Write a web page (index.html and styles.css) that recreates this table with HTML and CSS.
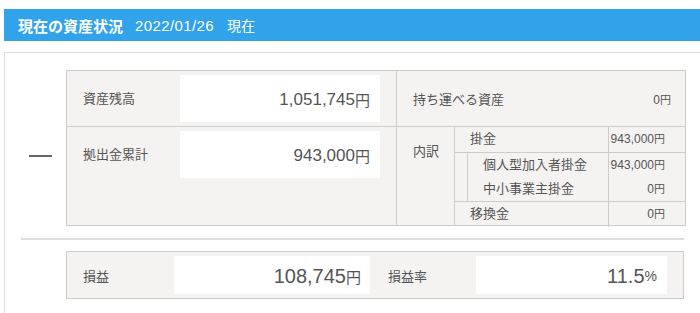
FILE: index.html
```html
<!DOCTYPE html>
<html lang="ja">
<head>
    <meta charset="UTF-8">
    <title>現在の資産状況</title>
    <link rel="stylesheet" href="styles.css">
</head>
<body>
    <div class="page">
        <h2 class="title-bar">
            <span class="title">現在の資産状況</span>
            <span class="date">2022/01/26<span class="suffix">現在</span></span>
        </h2>

        <div class="summary">
            <div class="calc">
                <div class="op"><div class="minus"></div></div>

                <div class="asset-table">
                    <div class="main">
                        <div class="main-row balance">
                            <div class="label">資産残高</div>
                            <div class="value-box">1,051,745<span class="yen">円</span></div>
                        </div>
                        <div class="main-row total">
                            <div class="label">拠出金累計</div>
                            <div class="value-box">943,000<span class="yen">円</span></div>
                        </div>
                    </div>

                    <div class="side">
                        <div class="portable">
                            <span>持ち運べる資産</span>
                            <span class="amt-s">0<span class="yen-s">円</span></span>
                        </div>
                        <div class="breakdown">
                            <div class="bd-label">内訳</div>
                            <div class="bd-body">
                                <div class="bd-row first">
                                    <span class="bd-name">掛金</span>
                                    <span class="bd-amt">943,000<span class="yen-s">円</span></span>
                                </div>
                                <div class="bd-nested">
                                    <div class="bd-row">
                                        <span class="bd-name">個人型加入者掛金</span>
                                        <span class="bd-amt">943,000<span class="yen-s">円</span></span>
                                    </div>
                                    <div class="bd-row">
                                        <span class="bd-name">中小事業主掛金</span>
                                        <span class="bd-amt">0<span class="yen-s">円</span></span>
                                    </div>
                                </div>
                                <div class="bd-row last">
                                    <span class="bd-name">移換金</span>
                                    <span class="bd-amt">0<span class="yen-s">円</span></span>
                                </div>
                            </div>
                        </div>
                    </div>
                </div>
            </div>

            <div class="divider"></div>

            <div class="profit">
                <div class="p-label">損益</div>
                <div class="p-box gain">108,745<span class="yen">円</span></div>
                <div class="p-label rate-label">損益率</div>
                <div class="p-box rate">11.5<span class="pct">%</span></div>
            </div>
        </div>
    </div>
</body>
</html>
```

FILE: styles.css
```css
html, body {
    overflow: hidden;
}
body {
    margin: 0;
    font-family: "Liberation Sans", "Noto Sans CJK JP", sans-serif;
    font-size: 13px;
    color: #555;
    background-color: #fff;
}
.page {
    padding: 9px 0 0 4px;
    width: 700px;
}

/* Title bar */
.title-bar {
    margin: 0;
    height: 32px;
    display: flex;
    align-items: center;
    padding-left: 14px;
    background-color: #30a3ea;
    color: #fff;
    font-weight: normal;
}
.title {
    font-size: 15px;
    font-weight: bold;
}
.date {
    font-size: 15px;
    letter-spacing: 0.4px;
    margin-left: 12px;
}
.date .suffix {
    font-size: 14px;
    letter-spacing: 0;
    margin-left: 13px;
}

/* Summary panel */
.summary {
    margin-top: 11px;
    border: 1px solid #ddd;
    padding: 17px 0 40px;
}
.calc {
    display: flex;
}
.op {
    width: 61px;
    padding: 85px 0 0 24px;
    box-sizing: border-box;
}
.minus {
    width: 23px;
    height: 2px;
    background-color: #666;
}

.asset-table {
    display: flex;
    width: 618px;
    border: 1px solid #ccc;
    background-color: #f4f3f1;
}
.main {
    width: 330px;
    border-right: 1px solid #ccc;
    box-sizing: border-box;
}
.main-row {
    display: flex;
    align-items: flex-start;
    padding-top: 4px;
    box-sizing: border-box;
}
.main-row.balance {
    height: 56px;
    border-bottom: 1px solid #ccc;
}
.main-row.total {
    height: 98px;
}
.label {
    width: 113px;
    padding-left: 16px;
    box-sizing: border-box;
    line-height: 47px;
}
.value-box {
    width: 200px;
    height: 47px;
    display: flex;
    align-items: center;
    justify-content: flex-end;
    padding: 2px 10px 0 0;
    box-sizing: border-box;
    background-color: #fff;
    font-size: 17px;
    color: #555;
}
.yen {
    font-size: 15px;
}

.side {
    flex-grow: 1;
}
.portable {
    height: 56px;
    display: flex;
    align-items: center;
    justify-content: space-between;
    padding: 0 14px 0 16px;
    border-bottom: 1px solid #ccc;
    box-sizing: border-box;
}
.amt-s, .bd-amt {
    font-size: 12px;
    color: #555;
}
.yen-s {
    font-size: 11px;
}

/* Breakdown of contributions */
.breakdown {
    display: flex;
    height: 98px;
}
.bd-label {
    width: 58px;
    padding: 14px 0 0 16px;
    border-right: 1px solid #ccc;
    box-sizing: border-box;
}
.bd-body {
    flex-grow: 1;
}
.bd-row {
    display: flex;
    height: 24px;
    line-height: 24px;
}
.bd-row.first {
    height: 25px;
    border-bottom: 1px solid #ccc;
}
.bd-row.last {
    height: 25px;
    border-top: 1px solid #ccc;
}
.bd-nested {
    margin-left: 12px;
    border-left: 1px solid #ccc;
}
.bd-name {
    flex-grow: 1;
    padding-left: 15px;
}
.bd-amt {
    width: 77px;
    padding-right: 20px;
    text-align: right;
    border-left: 1px solid #ccc;
    box-sizing: border-box;
}

.divider {
    width: 663px;
    height: 2px;
    margin: 12px 0 11px 16px;
    background-color: #ddd;
}

/* Profit row */
.profit {
    display: flex;
    align-items: center;
    width: 618px;
    height: 48px;
    margin-left: 61px;
    border: 1px solid #ccc;
    box-sizing: border-box;
    background-color: #f4f3f1;
}
.p-label {
    width: 107px;
    padding-left: 16px;
    box-sizing: border-box;
}
.p-label.rate-label {
    width: 106px;
    padding-left: 18px;
}
.p-box {
    height: 38px;
    display: flex;
    align-items: center;
    justify-content: flex-end;
    padding: 2px 9px 0 0;
    box-sizing: border-box;
    background-color: #fff;
    font-size: 20px;
    color: #555;
}
.p-box.gain {
    width: 196px;
}
.p-box.rate {
    width: 191px;
    padding-right: 10px;
}
.pct {
    font-size: 14px;
}
```
